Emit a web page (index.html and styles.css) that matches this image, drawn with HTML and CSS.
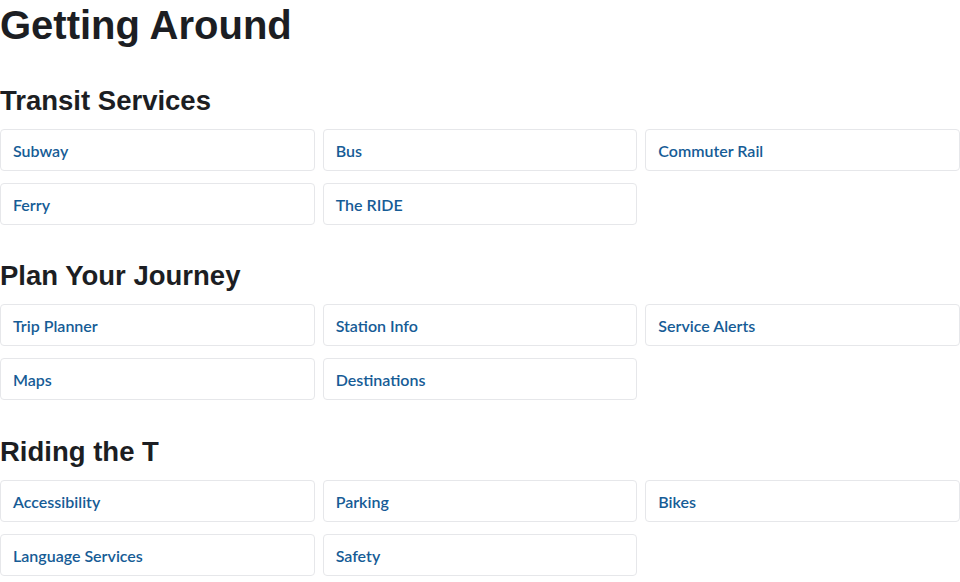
FILE: index.html
```html
<!DOCTYPE html>
<html lang="en">
<head>
<meta charset="utf-8">
<title>Getting Around</title>
<link rel="stylesheet" href="styles.css">
</head>
<body>
<main class="page">
  <h1 class="page-title">Getting Around</h1>

  <section class="section">
    <h2 class="section-title">Transit Services</h2>
    <div class="link-grid">
      <a class="link-card" href="#">Subway</a>
      <a class="link-card" href="#">Bus</a>
      <a class="link-card" href="#">Commuter Rail</a>
      <a class="link-card" href="#">Ferry</a>
      <a class="link-card" href="#">The RIDE</a>
    </div>
  </section>

  <section class="section">
    <h2 class="section-title">Plan Your Journey</h2>
    <div class="link-grid">
      <a class="link-card" href="#">Trip Planner</a>
      <a class="link-card" href="#">Station Info</a>
      <a class="link-card" href="#">Service Alerts</a>
      <a class="link-card" href="#">Maps</a>
      <a class="link-card" href="#">Destinations</a>
    </div>
  </section>

  <section class="section">
    <h2 class="section-title">Riding the T</h2>
    <div class="link-grid">
      <a class="link-card" href="#">Accessibility</a>
      <a class="link-card" href="#">Parking</a>
      <a class="link-card" href="#">Bikes</a>
      <a class="link-card" href="#">Language Services</a>
      <a class="link-card" href="#">Safety</a>
    </div>
  </section>
</main>
</body>
</html>
```

FILE: styles.css
```css
html, body {
  margin: 0;
  padding: 0;
  background: #ffffff;
}

.page {
  padding-top: 1px;
  display: flex;
  flex-direction: column;
}

.page-title {
  margin: 0;
  font-family: "Liberation Sans", Arial, sans-serif;
  font-weight: 700;
  font-size: 40px;
  line-height: 48px;
  color: #1c1e23;
}

.section {
  margin-top: 35.4px;
  display: flex;
  flex-direction: column;
  gap: 12px;
}

.section:first-of-type {
  margin-top: 36px;
}

.section-title {
  margin: 0;
  font-family: "Liberation Sans", Arial, sans-serif;
  font-weight: 700;
  font-size: 27.5px;
  line-height: 32px;
  color: #1c1e23;
}

.link-grid {
  display: grid;
  grid-template-columns: repeat(3, 1fr);
  column-gap: 8px;
  row-gap: 12px;
}

.link-card {
  display: block;
  border: 1px solid #e6e7ea;
  border-radius: 4px;
  padding: 12px 12px 10px;
  font-family: Lato, "Open Sans", sans-serif;
  font-weight: 600;
  font-size: 16px;
  line-height: 18px;
  color: #165c96;
  text-decoration: none;
}
```
